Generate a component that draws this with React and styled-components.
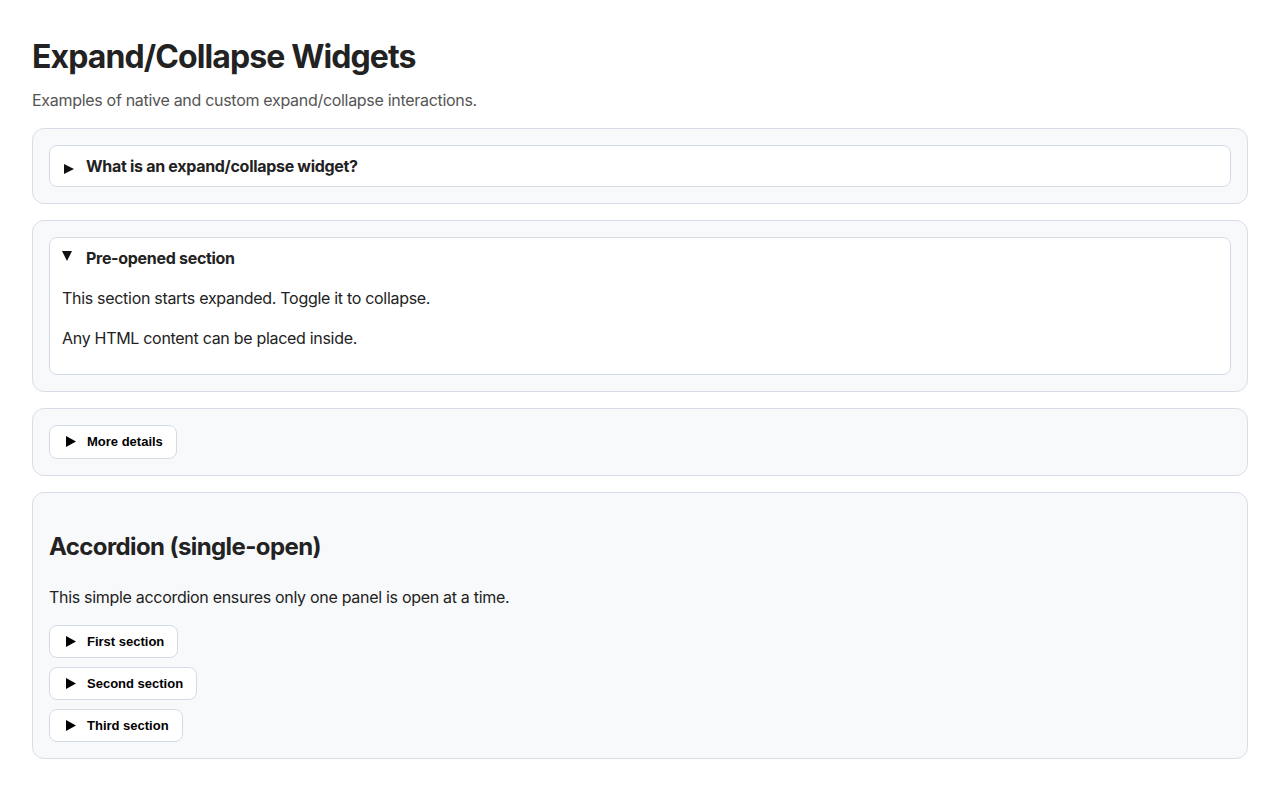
import React from "react";
import styled, { createGlobalStyle } from "styled-components";

const Global = createGlobalStyle`
  * { box-sizing: border-box; }
  body {
    margin: 0;
    background: #ffffff;
    color: #222222;
    font-family: Inter, "Noto Sans", sans-serif;
    font-size: 16px;
    line-height: 1.5;
    letter-spacing: -0.3px;
  }
`;

const Page = styled.div`
  padding: 32px;
`;

const Title = styled.h1`
  font-size: 32px;
  font-weight: 700;
  line-height: 48px;
  margin: 1px 0 7px;
  letter-spacing: -0.9px;
`;

const Sub = styled.p`
  margin: 0 0 16px;
  color: #555555;
`;

const Card = styled.section`
  background: #f8f9fb;
  border: 1px solid #d8dde8;
  border-radius: 12px;
  padding: 16px;
  margin-bottom: 16px;
`;

const Details = styled.div`
  background: #ffffff;
  border: 1px solid #d5dbe6;
  border-radius: 8px;
`;

const Summary = styled.div`
  display: flex;
  align-items: center;
  gap: 14px;
  padding: 8px 12px;
  font-weight: 700;
  cursor: pointer;
`;

const Marker = styled.svg`
  width: 10px;
  height: 10px;
  flex: none;
  margin-top: ${(p) => (p.$open ? "-4px" : "6px")};
  margin-left: ${(p) => (p.$open ? "0" : "2px")};
  margin-right: ${(p) => (p.$open ? "0" : "-2px")};
`;

const Body = styled.div`
  padding: 0 12px 8px;

  p {
    margin: 8px 0 16px;
  }
  p + p {
    margin-top: 0;
  }
`;

const Toggle = styled.button`
  display: flex;
  align-items: center;
  gap: 11px;
  height: 33.5px;
  padding: 0 13px 0 16px;
  background: #ffffff;
  border: 1px solid #d5dbe6;
  border-radius: 8px;
  font-family: "Liberation Sans", Arial, sans-serif;
  font-size: 13px;
  font-weight: 700;
  letter-spacing: 0;
  color: #000000;
  cursor: pointer;
  margin-top: ${(p) => (p.$first ? "0" : "8.5px")};
`;

const Heading = styled.h2`
  font-size: 24px;
  font-weight: 700;
  line-height: 36px;
  margin: 20px 0;
  letter-spacing: -0.6px;
`;

const Text = styled.p`
  margin: 0 0 16px;
`;

const Stack = styled.div`
  display: flex;
  flex-direction: column;
  align-items: flex-start;
`;

const Tri = ({ open }) => (
  <Marker $open={open} viewBox="0 0 10 10">
    {open ? (
      <polygon points="0,0 10,0 5,10" fill="#111" />
    ) : (
      <polygon points="0,0 10,5 0,10" fill="#111" />
    )}
  </Marker>
);

const Play = () => (
  <svg width="10" height="11" viewBox="0 0 10 11">
    <polygon points="0,0 10,5.5 0,11" fill="#000" />
  </svg>
);

const App = () => {
  return (
    <>
      <Global />
      <Page>
        <Title>Expand/Collapse Widgets</Title>
        <Sub>Examples of native and custom expand/collapse interactions.</Sub>

        <Card>
          <Details>
            <Summary>
              <Tri />
              What is an expand/collapse widget?
            </Summary>
          </Details>
        </Card>

        <Card>
          <Details>
            <Summary>
              <Tri open />
              Pre-opened section
            </Summary>
            <Body>
              <p>This section starts expanded. Toggle it to collapse.</p>
              <p>Any HTML content can be placed inside.</p>
            </Body>
          </Details>
        </Card>

        <Card>
          <Stack>
            <Toggle $first>
              <Play />
              More details
            </Toggle>
          </Stack>
        </Card>

        <Card>
          <Heading>Accordion (single-open)</Heading>
          <Text>This simple accordion ensures only one panel is open at a time.</Text>
          <Stack>
            <Toggle $first>
              <Play />
              First section
            </Toggle>
            <Toggle>
              <Play />
              Second section
            </Toggle>
            <Toggle>
              <Play />
              Third section
            </Toggle>
          </Stack>
        </Card>
      </Page>
    </>
  );
};

export default App;
